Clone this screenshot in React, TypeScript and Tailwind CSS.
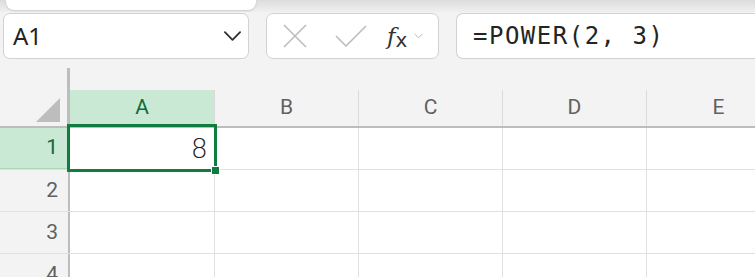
import React from "react";

const cols = ["A", "B", "C", "D", "E"];
const rows = [1, 2, 3, 4];

function Chevron({ className = "" }: { className?: string }) {
  return (
    <svg viewBox="0 0 20 12" className={className} fill="none">
      <path d="M2 2 L10 10 L18 2" stroke="currentColor" strokeWidth="2" strokeLinecap="round" strokeLinejoin="round" />
    </svg>
  );
}

export default function App() {
  return (
    <div className="w-[755px] h-[277px] overflow-hidden bg-[#f3f3f3] font-['Roboto',sans-serif]">
      {/* top ribbon edge */}
      <div className="h-[12px] bg-gradient-to-b from-[#dcdcdc] to-[#f0f0f0] flex">
        <div className="ml-[6px] w-[250px] h-[10px] bg-white rounded-b-[8px] shadow-[0_1px_2px_rgba(0,0,0,0.15)]" />
      </div>

      {/* formula bar */}
      <div className="flex items-center h-[47px] pt-[1px]">
        <div className="ml-[3px] w-[246px] h-[46px] bg-white border border-[#d1d1d1] rounded-[7px] flex items-center pl-[9px] pr-[6px]">
          <span className="flex-1 text-[24px] text-[#242424] font-['Noto_Sans',sans-serif] leading-none">A1</span>
          <Chevron className="w-[19px] h-[12px] text-[#333]" />
        </div>
        <div className="ml-[17px] w-[173px] h-[46px] bg-white border border-[#d1d1d1] rounded-[7px] flex items-center pl-[16px]">
          <svg viewBox="0 0 24 24" className="w-[24px] h-[24px]" fill="none">
            <path d="M1 1 L23 23 M23 1 L1 23" stroke="#bdbdbd" strokeWidth="1.6" />
          </svg>
          <svg viewBox="0 0 32 22" className="ml-[28px] w-[32px] h-[22px]" fill="none">
            <path d="M1 11 L11 21 L31 1" stroke="#bdbdbd" strokeWidth="1.6" />
          </svg>
          <span className="ml-[20px] font-['DejaVu_Serif',serif] italic text-[23px] text-[#333] leading-none">
            f<span className="text-[20px] not-italic font-['DejaVu_Sans',sans-serif] relative top-[3px]">x</span>
          </span>
          <Chevron className="ml-[7px] w-[9px] h-[6px] text-[#b0b0b0]" />
        </div>
        <div className="ml-[17px] flex-1 h-[46px] bg-white border border-[#d1d1d1] border-r-0 rounded-l-[7px] flex items-center pl-[16px]">
          <span className="font-['DejaVu_Sans_Mono',monospace] text-[24px] tracking-[1.5px] text-[#242424] leading-none">
            =POWER(2, 3)
          </span>
        </div>
      </div>

      {/* grid */}
      <div className="relative mt-[9px]">
        <div className="flex items-end border-b-[2px] border-[#bdbdbd]">
          <div className="w-[70px] h-[58px] shrink-0 flex items-end justify-end pr-[7px] pb-[4px] border-r-[3px] border-[#bdbdbd]">
            <svg viewBox="0 0 24 24" className="w-[24px] h-[24px]">
              <path d="M24 0 L24 24 L0 24 Z" fill="#bdbdbd" />
            </svg>
          </div>
          {cols.map((c, i) => (
            <div
              key={c}
              className={
                i === 0
                  ? "w-[144px] h-[36px] shrink-0 flex items-center justify-center bg-[#c9e9d5] text-[#0f6b3a] text-[21px]"
                  : "w-[144px] h-[36px] shrink-0 flex items-center justify-center border-l border-[#dadada] text-[#616161] text-[21px]"
              }
            >
              {c}
            </div>
          ))}
        </div>
        {rows.map((r) => (
          <div key={r} className="flex h-[42px] border-b border-[#e0e0e0]">
            <div
              className={
                r === 1
                  ? "w-[70px] shrink-0 flex items-center justify-end pr-[10px] bg-[#c9e9d5] text-[#0f6b3a] text-[21px] border-b border-[#a9d8bb] border-r-2 border-r-[#bdbdbd]"
                  : "w-[70px] shrink-0 flex items-center justify-end pr-[10px] text-[#616161] text-[21px] border-r-2 border-[#bdbdbd]"
              }
            >
              {r}
            </div>
            {cols.map((c, i) => (
              <div
                key={c}
                className={
                  i === 0
                    ? "w-[144px] shrink-0 bg-white flex items-center justify-end pr-[6px]"
                    : "w-[144px] shrink-0 bg-white border-l border-[#e0e0e0]"
                }
              >
                {r === 1 && i === 0 ? (
                  <span className="font-['DejaVu_Sans',sans-serif] font-extralight text-[27px] leading-none text-[#222]">8</span>
                ) : null}
              </div>
            ))}
          </div>
        ))}

        {/* selected cell */}
        <div className="absolute left-[67px] top-[56px] w-[150px] h-[48px] border-[3px] border-[#107c41] pointer-events-none" />
        <div className="absolute left-[211px] top-[98px] w-[9px] h-[9px] bg-[#107c41] border border-white pointer-events-none" />
      </div>
    </div>
  );
}
